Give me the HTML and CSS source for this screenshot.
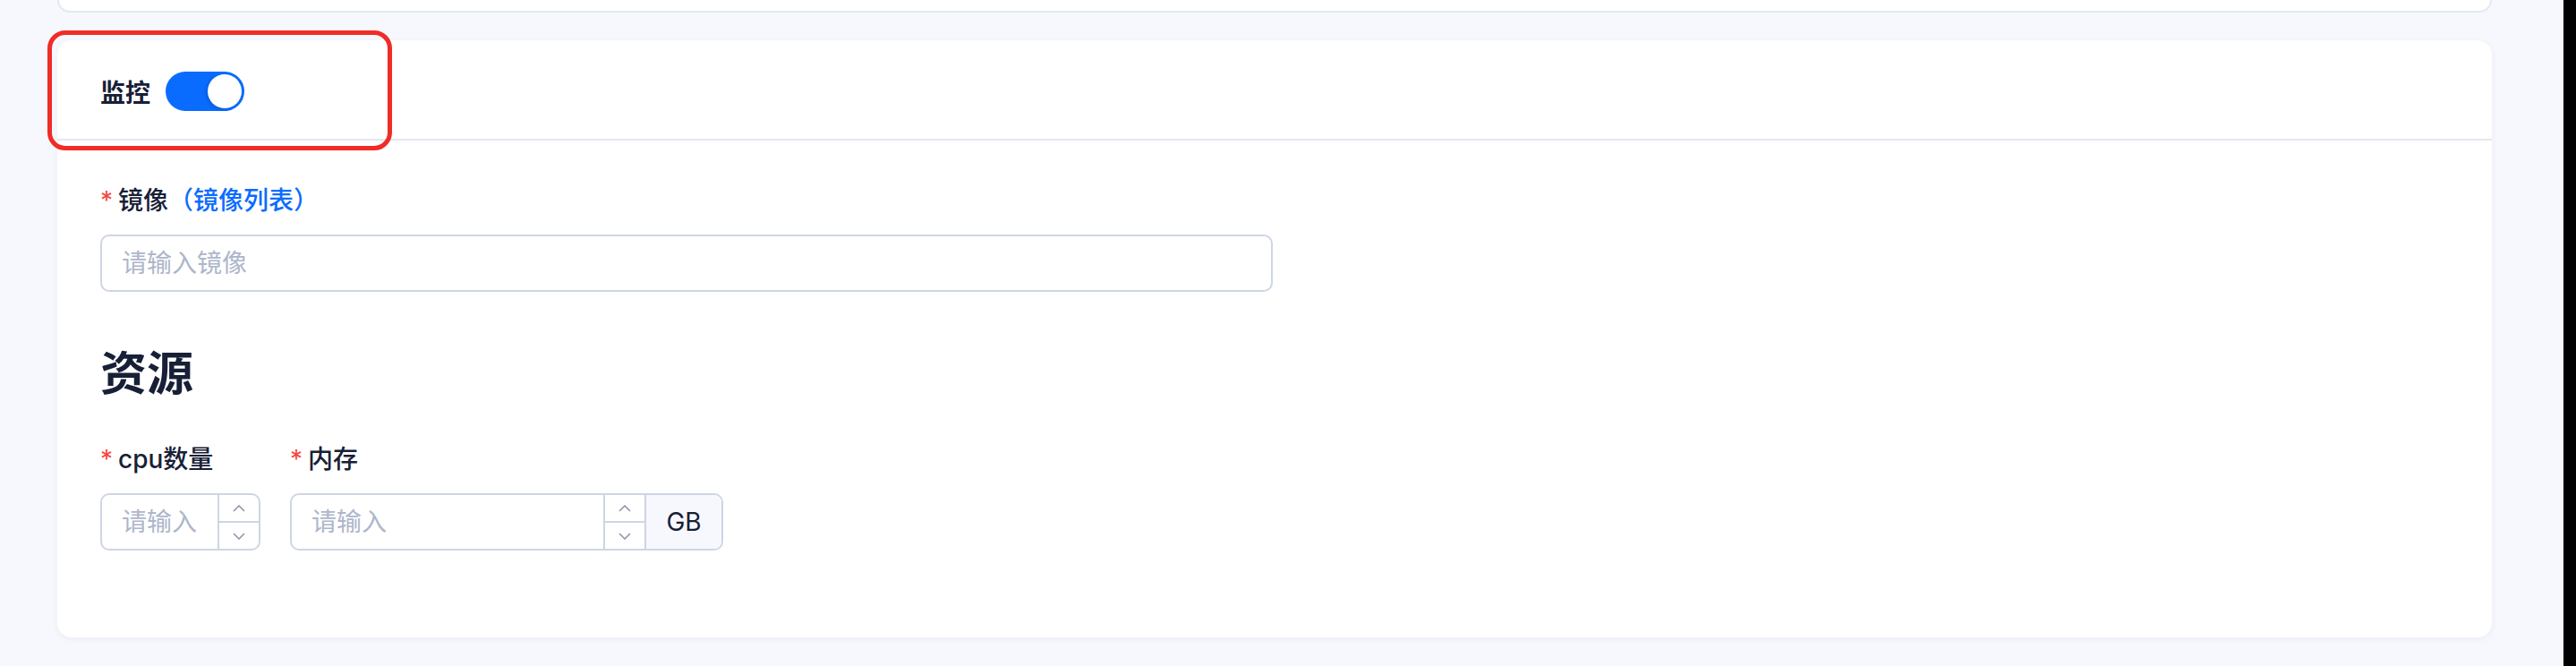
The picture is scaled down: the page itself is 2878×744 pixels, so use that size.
FILE: index.html
```html
<!DOCTYPE html>
<html>
<head>
    <meta charset="UTF-8">
    <title>容器配置</title>
    <link rel="stylesheet" href="styles.css">
</head>
<body>
    <div class="page">
        <div class="main">
            <div class="card card-prev"></div>

            <div class="card card-form">
                <div class="card-header">
                    <span class="switch-label">监控</span>
                    <span class="switch on"><span class="switch-knob"></span></span>
                    <div class="highlight"></div>
                </div>

                <div class="card-body">
                    <div class="form-item">
                        <label class="form-label"><span class="required">*</span>镜像<a class="link">（镜像列表）</a></label>
                        <input type="text" class="text-input image-input" placeholder="请输入镜像">
                    </div>

                    <h2 class="section-title">资源</h2>

                    <div class="form-row">
                        <div class="form-item">
                            <label class="form-label"><span class="required">*</span>cpu数量</label>
                            <div class="number-input cpu-input">
                                <input type="text" placeholder="请输入">
                                <div class="stepper">
                                    <span class="step">
                                        <svg width="14" height="8" viewBox="0 0 14 8"><path d="M1 7L7 1L13 7" fill="none" stroke="#8b93a8" stroke-width="1.5"/></svg>
                                    </span>
                                    <span class="step">
                                        <svg width="14" height="8" viewBox="0 0 14 8"><path d="M1 1L7 7L13 1" fill="none" stroke="#8b93a8" stroke-width="1.5"/></svg>
                                    </span>
                                </div>
                            </div>
                        </div>
                        <div class="form-item">
                            <label class="form-label"><span class="required">*</span>内存</label>
                            <div class="number-input mem-input">
                                <input type="text" placeholder="请输入">
                                <div class="stepper">
                                    <span class="step">
                                        <svg width="14" height="8" viewBox="0 0 14 8"><path d="M1 7L7 1L13 7" fill="none" stroke="#8b93a8" stroke-width="1.5"/></svg>
                                    </span>
                                    <span class="step">
                                        <svg width="14" height="8" viewBox="0 0 14 8"><path d="M1 1L7 7L13 1" fill="none" stroke="#8b93a8" stroke-width="1.5"/></svg>
                                    </span>
                                </div>
                                <span class="addon">GB</span>
                            </div>
                        </div>
                    </div>
                </div>
            </div>
        </div>
        <div class="edge"></div>
    </div>
</body>
</html>
```

FILE: styles.css
```css
body {
    margin: 0;
    padding: 0;
    background: #f7f8fd;
    font-family: Inter, "Noto Sans CJK SC", sans-serif;
    color: #172036;
}

.page {
    display: flex;
    height: 744px;
    overflow: hidden;
}

.main {
    flex: 1;
    padding: 0 80px 0 64px;
}

.edge {
    width: 14px;
    background: #000;
}

.card {
    background: #fff;
    border-radius: 16px;
    box-sizing: border-box;
}

.card-prev {
    height: 14px;
    border: 2px solid #e4e8f1;
    border-top: none;
    border-radius: 0 0 16px 16px;
}

.card-form {
    margin-top: 31px;
    height: 667px;
    box-shadow: 0 2px 8px rgba(30, 45, 90, 0.05);
}

.card-header {
    position: relative;
    display: flex;
    align-items: center;
    height: 110px;
    padding: 0 48px;
    border-bottom: 2px solid #e3e7f0;
}

.switch-label {
    font-size: 28px;
    font-weight: 700;
    margin-right: 17px;
    padding-top: 4px;
}

.switch {
    position: relative;
    width: 88px;
    height: 44px;
    border-radius: 22px;
    background: #0a6cff;
    margin-top: 4px;
}

.switch-knob {
    position: absolute;
    top: 3px;
    right: 3px;
    width: 38px;
    height: 38px;
    border-radius: 50%;
    background: #fff;
    box-shadow: -2px 1px 4px rgba(0, 30, 90, 0.2);
}

/* red marker drawn over the header */
.highlight {
    position: absolute;
    left: -11px;
    top: -11px;
    width: 385px;
    height: 134px;
    border: 5px solid #f02c27;
    border-radius: 20px;
    box-sizing: border-box;
}

.card-body {
    padding: 45px 48px 0;
}

.form-label {
    display: block;
    font-size: 28px;
    line-height: 44px;
    font-weight: 500;
    margin-bottom: 16px;
}

.required {
    color: #f5473d;
    font-weight: 400;
    margin-right: 6px;
}

.link {
    color: #0a6cff;
}

.text-input,
.number-input {
    height: 64px;
    border: 2px solid #ced5e4;
    border-radius: 10px;
    box-sizing: border-box;
    background: #fff;
}

.image-input {
    display: block;
    width: 1310px;
    padding: 0 22px;
    font-family: inherit;
    font-size: 28px;
    outline: none;
}

input::placeholder {
    color: #adb6ca;
}

.section-title {
    margin: 56px 0 37px;
    font-size: 52px;
    line-height: 72px;
    font-weight: 700;
}

.form-row {
    display: flex;
    gap: 33px;
}

.number-input {
    display: flex;
    overflow: hidden;
}

.number-input input {
    flex: 1;
    min-width: 0;
    border: none;
    outline: none;
    padding: 0 22px;
    font-family: inherit;
    font-size: 28px;
    background: transparent;
}

.cpu-input {
    width: 179px;
}

.mem-input {
    width: 484px;
}

.stepper {
    display: flex;
    flex-direction: column;
    width: 44px;
    border-left: 2px solid #ced5e4;
}

.step {
    flex: 1;
    display: flex;
    align-items: center;
    justify-content: center;
}

.step + .step {
    border-top: 2px solid #ced5e4;
}

.addon {
    display: flex;
    align-items: center;
    justify-content: center;
    width: 84px;
    border-left: 2px solid #ced5e4;
    background: #f7f8fd;
    font-size: 28px;
}
```
